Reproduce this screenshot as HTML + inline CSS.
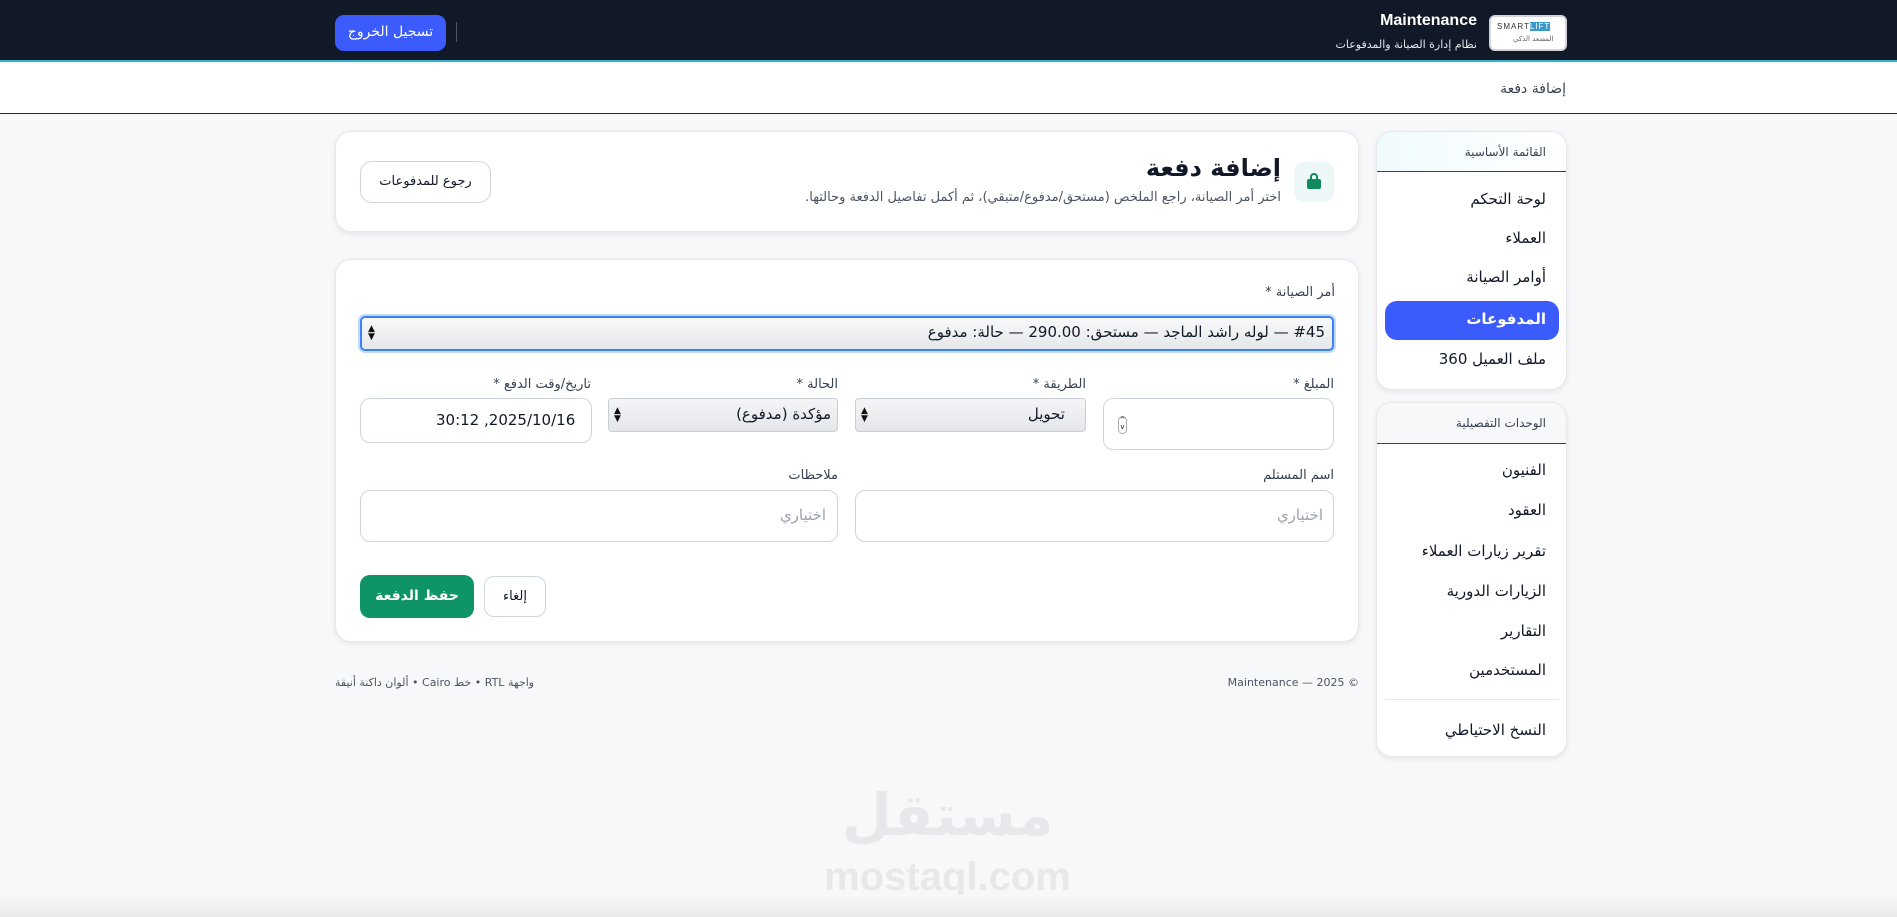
<!DOCTYPE html>
<html dir="rtl"><head><meta charset="utf-8"><style>
*{box-sizing:border-box;margin:0;padding:0}
body{width:1897px;height:917px;overflow:hidden;background:#f7f8fa;font-family:"DejaVu Sans","Liberation Sans",sans-serif;color:#111827;position:relative}
.a{position:absolute}
.hdr{left:0;top:0;width:1897px;height:62px;background:#111827;border-bottom:2px solid #2fb5d0}
.crumb{left:0;top:64px;width:1897px;height:50px;background:#fff;border-bottom:1.5px solid #1f2937}
.card{background:#fff;border:1px solid #e5e7eb;border-radius:16px;box-shadow:0 2px 6px rgba(0,0,0,.08)}
.lbl{font-size:13px;color:#374151;text-align:right}
.inp{background:#fff;border:1px solid #cfd5de;border-radius:10px}
.sel{background:linear-gradient(#f4f5f7,#e4e6ea);border:1px solid #c9ced6;border-radius:4px}
.side{right:0;width:100%;text-align:right;padding-right:20px;font-size:15px;color:#111827}
.ph{font-size:15px;color:#9ca3af}
.arr{font-size:9px;line-height:8px;color:#111}
</style></head><body>
<div class="a hdr"></div>
<div class="a" style="left:1489px;top:15px;width:78px;height:36px;background:#fff;border-radius:6px;border:2px solid #d1d5db">
 <div class="a" style="left:6px;top:5px;font-size:8px;letter-spacing:1px;color:#333;font-family:'Liberation Sans'">SMART<span style="background:#3a9ac9;color:#fff">LIFT</span></div>
 <div class="a" style="left:22px;top:18px;font-size:7px;color:#666">المصعد الذكي</div></div>
<div class="a" style="right:420px;top:12px;font-size:16px;font-weight:bold;color:#fff;font-family:'Liberation Sans'">Maintenance</div>
<div class="a" style="right:420px;top:38px;font-size:11px;color:#e5e7eb">نظام إدارة الصيانة والمدفوعات</div>
<div class="a" style="left:456px;top:22px;width:1px;height:20px;background:#4b5563"></div>
<div class="a" style="left:335px;top:15px;width:111px;height:36px;background:#3b5bfd;border-radius:9px;color:#fff;font-size:14px;text-align:center;line-height:34px">تسجيل الخروج</div>
<div class="a crumb"></div>
<div class="a" style="right:331px;top:81px;font-size:14px;color:#374151">إضافة دفعة</div>

<div class="a card" style="left:1376px;top:131px;width:191px;height:259px;overflow:hidden">
 <div class="a" style="left:0;top:0;width:100%;height:40px;background:linear-gradient(90deg,#f0fbfd,#fff);border-bottom:1.5px solid #374151"></div>
 <div class="a side" style="top:13px;font-size:12px;color:#374151">القائمة الأساسية</div>
 <div class="a side" style="top:58px">لوحة التحكم</div>
 <div class="a side" style="top:97px">العملاء</div>
 <div class="a side" style="top:136px">أوامر الصيانة</div>
 <div class="a" style="left:8px;top:169px;width:174px;height:39px;background:#3b5bfd;border-radius:12px"></div>
 <div class="a side" style="top:178px;color:#fff;font-weight:bold">المدفوعات</div>
 <div class="a side" style="top:218px">ملف العميل 360</div>
</div>
<div class="a card" style="left:1376px;top:402px;width:191px;height:355px;overflow:hidden">
 <div class="a" style="left:0;top:0;width:100%;height:41px;background:#f7f8fa;border-bottom:1.5px solid #374151"></div>
 <div class="a side" style="top:13px;font-size:12px;color:#374151">الوحدات التفصيلية</div>
 <div class="a side" style="top:58px">الفنيون</div>
 <div class="a side" style="top:98px">العقود</div>
 <div class="a side" style="top:139px">تقرير زيارات العملاء</div>
 <div class="a side" style="top:179px">الزيارات الدورية</div>
 <div class="a side" style="top:219px">التقارير</div>
 <div class="a side" style="top:258px">المستخدمين</div>
 <div class="a" style="left:8px;top:296px;width:174px;height:1px;background:#e5e7eb"></div>
 <div class="a side" style="top:318px">النسخ الاحتياطي</div>
</div>

<div class="a card" style="left:335px;top:131px;width:1024px;height:101px">
 <div class="a" style="left:958px;top:30px;width:40px;height:40px;background:#eef7f8;border-radius:10px">
  <svg class="a" style="left:12px;top:11px" width="16" height="17" viewBox="0 0 16 17"><path d="M5 6V4a3 3 0 0 1 6 0v2" stroke="#0f8a5f" stroke-width="2" fill="none"/><rect x="1" y="6" width="14" height="10" rx="2" fill="#0f8a5f"/></svg></div>
 <div class="a" style="right:77px;top:22px;font-size:24px;font-weight:bold;color:#111827">إضافة دفعة</div>
 <div class="a" style="right:77px;top:58px;font-size:13px;color:#4b5563">اختر أمر الصيانة، راجع الملخص (مستحق/مدفوع/متبقي)، ثم أكمل تفاصيل الدفعة وحالتها.</div>
 <div class="a" style="left:24px;top:29px;width:131px;height:42px;border:1px solid #cfd5de;border-radius:12px;font-size:13px;text-align:center;line-height:40px">رجوع للمدفوعات</div>
</div>

<div class="a card" style="left:335px;top:259px;width:1024px;height:383px"></div>
<div class="a lbl" style="right:562px;top:285px">أمر الصيانة *</div>
<div class="a" style="left:360px;top:316px;width:974px;height:35px;border:2px solid #3b82f6;border-radius:5px;background:linear-gradient(#f8f9fa,#e5e7ea);box-shadow:0 0 0 2px #bfdbfe"></div>
<div class="a" style="right:572px;top:323px;font-size:15px">#45 — لوله راشد الماجد — مستحق: 290.00 — حالة: مدفوع</div>
<div class="a arr" style="left:368px;top:325px">▲<br>▼</div>

<div class="a lbl" style="right:563px;top:377px">المبلغ *</div>
<div class="a lbl" style="right:811px;top:377px">الطريقة *</div>
<div class="a lbl" style="right:1059px;top:377px">الحالة *</div>
<div class="a lbl" style="right:1306px;top:377px">تاريخ/وقت الدفع *</div>
<div class="a inp" style="left:1103px;top:398px;width:231px;height:52px"></div>
<div class="a" style="left:1118px;top:416px;width:9px;height:18px;border:1px solid #aaa;border-radius:5px;font-size:7px;text-align:center;line-height:7px">^<br>v</div>
<div class="a sel" style="left:855px;top:398px;width:231px;height:34px"></div>
<div class="a" style="right:832px;top:405px;font-size:15px">تحويل</div>
<div class="a arr" style="left:861px;top:407px">▲<br>▼</div>
<div class="a sel" style="left:608px;top:398px;width:230px;height:34px"></div>
<div class="a" style="right:1066px;top:405px;font-size:15px">مؤكدة (مدفوع)</div>
<div class="a arr" style="left:614px;top:407px">▲<br>▼</div>
<div class="a inp" style="left:360px;top:398px;width:232px;height:45px"></div>
<div class="a" style="left:436px;top:411px;font-size:15px;display:flex;direction:ltr;gap:0"><span>30:12</span><span>&nbsp;,</span><span>2025/10/16</span></div>

<div class="a lbl" style="right:563px;top:468px">اسم المستلم</div>
<div class="a lbl" style="right:1059px;top:468px">ملاحظات</div>
<div class="a inp" style="left:855px;top:490px;width:479px;height:52px"></div>
<div class="a ph" style="right:574px;top:506px">اختياري</div>
<div class="a inp" style="left:360px;top:490px;width:478px;height:52px"></div>
<div class="a ph" style="right:1071px;top:506px">اختياري</div>

<div class="a" style="left:360px;top:575px;width:114px;height:43px;background:#0f9466;border-radius:10px;color:#fff;font-weight:bold;font-size:14px;text-align:center;line-height:43px">حفظ الدفعة</div>
<div class="a" style="left:484px;top:576px;width:62px;height:41px;border:1px solid #cfd5de;border-radius:10px;background:#fff;font-size:13px;text-align:center;line-height:40px">إلغاء</div>

<div class="a" style="right:538px;top:676px;font-size:11px;color:#4b5563;display:flex;direction:ltr"><span>Maintenance — 2025</span><span>&nbsp;©</span></div>
<div class="a" style="left:335px;top:676px;font-size:11px;color:#4b5563">واجهة RTL • خط Cairo • ألوان داكنة أنيقة</div>

<div class="a" style="left:800px;top:775px;width:295px;text-align:center;font-size:58px;font-weight:bold;color:#e6e8eb;line-height:80px">مستقل</div>
<div class="a" style="left:800px;top:855px;width:295px;text-align:center;font-size:40px;font-weight:bold;color:#e6e8eb;font-family:'Liberation Sans';direction:ltr;line-height:44px">mostaql.com</div>
<div class="a" style="left:0;top:895px;width:1897px;height:22px;background:linear-gradient(#f7f8fa,#e9eaec)"></div>
</body></html>
